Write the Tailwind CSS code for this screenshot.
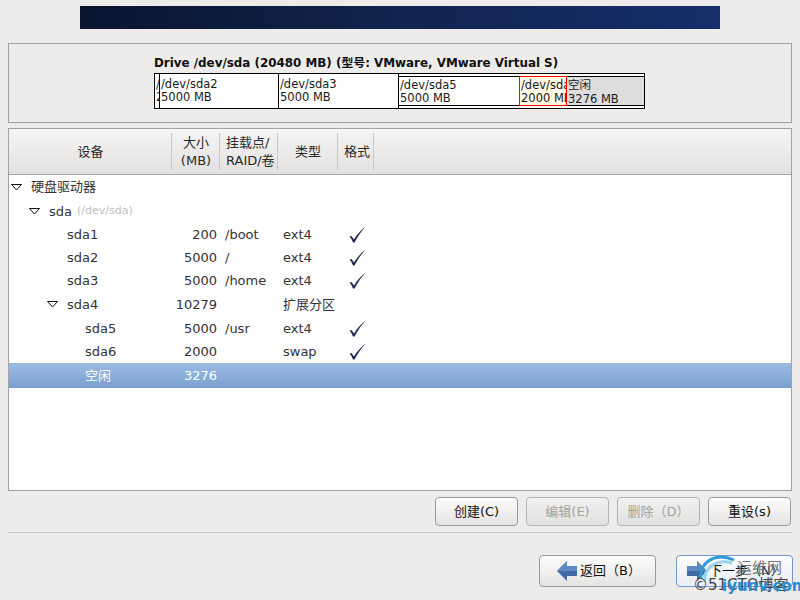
<!DOCTYPE html>
<html lang="en">
<head>
    <meta charset="UTF-8">
    <meta name="viewport" content="width=device-width, initial-scale=1.0">
    <script src="https://cdn.jsdelivr.net/npm/@tailwindcss/browser@4"></script>
    <title>Partition</title>
</head>
<body class="bg-[#edecea]">
<div class="relative w-[800px] h-[600px] overflow-hidden flex flex-col text-[13px] text-[#1a1a1a] font-['DejaVu_Sans','Noto_Sans_CJK_SC',sans-serif]">
    <!-- banner -->
    <div class="mt-[6px] ml-[80px] w-[640px] h-[23px] shrink-0 bg-gradient-to-r from-[#0a1530] via-[#12244f] to-[#172e6c]"></div>

    <!-- drive bar -->
    <div class="mt-[14px] ml-[8px] w-[784px] h-[80px] shrink-0 border border-[#a3a2a0] pl-[145px] pt-[11px]">
        <div class="h-[18px] leading-[16px] text-[11.9px] font-bold text-[#111] whitespace-nowrap">Drive /dev/sda (20480 MB) (型号: VMware, VMware Virtual S)</div>
        <div class="flex w-[491px] h-[36px] border border-black text-[11.5px] leading-[13px] bg-white overflow-hidden">
            <div class="w-[5px] shrink-0 overflow-hidden border-r border-black pt-[4px] pl-[1px] whitespace-nowrap"><span class="block w-[3px] overflow-hidden">/dev/sda1</span><span class="block w-[3px] overflow-hidden">200 MB</span></div>
            <div class="w-[119px] shrink-0 overflow-hidden border-r border-black pt-[4px] pl-[1px]">/dev/sda2<br>5000 MB</div>
            <div class="w-[120px] shrink-0 overflow-hidden border-r border-black pt-[4px] pl-[1px]">/dev/sda3<br>5000 MB</div>
            <!-- extended partition -->
            <div class="flex-1 flex border-y border-y-black mt-[2px] h-[30px] min-w-0">
                <div class="w-[120px] shrink-0 pl-[1px] pt-[2px]">/dev/sda5<br>5000 MB</div>
                <div class="w-[48px] shrink-0 -my-[1px] overflow-hidden border border-[#f00] bg-[#fdf8e4] pl-[1px] pt-[2px] whitespace-nowrap">/dev/sda6<br>2000 MB</div>
                <div class="flex-1 bg-[#dedede] pl-[1px] pt-[1px] leading-[14px]">空闲<br>3276 MB</div>
            </div>
        </div>
    </div>

    <!-- partition tree -->
    <div class="mt-[5px] ml-[8px] w-[784px] h-[363px] shrink-0 border border-[#a3a2a0] bg-white">
        <div class="h-[46px] grid grid-cols-[163px_48px_58px_60px_36px_1fr] border-b border-[#a8a7a5] bg-gradient-to-b from-[#f6f5f4] to-[#e2e1df] text-center leading-[18px] text-[#2a2a2a]">
            <div class="flex items-center justify-center border-r border-[#c9c8c6] my-[4px] pl-[1px]">设备</div>
            <div class="flex items-center justify-center border-r border-[#c9c8c6] my-[4px] pl-[1px]">大小<br>(MB)</div>
            <div class="flex items-center border-r border-[#c9c8c6] my-[4px] pl-[6px] text-left whitespace-nowrap">挂载点/<br>RAID/卷</div>
            <div class="flex items-center justify-center border-r border-[#c9c8c6] my-[4px] pl-[1px]">类型</div>
            <div class="flex items-center justify-center border-r border-[#c9c8c6] my-[4px] pl-[3px]">格式</div>
            <div></div>
        </div>

        <div class="h-[24px] flex items-center text-[#333]">
            <svg class="ml-[2px] mr-[9px]" width="11" height="7" viewBox="0 0 11 7"><path d="M.5.5h10L5.500 6z" fill="#fff" stroke="#111"/></svg>
            <span>硬盘驱动器</span>
        </div>
        <div class="h-[24px] flex items-center text-[#333] pt-[1px]">
            <svg class="ml-[20px] mr-[9px]" width="11" height="7" viewBox="0 0 11 7"><path d="M.5.5h10L5.500 6z" fill="#fff" stroke="#111"/></svg>
            <span>sda</span><span class="ml-[5px] text-[11px] text-[#c0c0c0]">(/dev/sda)</span>
        </div>

        <div class="h-[23px] grid grid-cols-[163px_48px_58px_60px_36px_1fr] items-center text-[#333]">
            <div class="pl-[58px]">sda1</div><div class="text-right pr-[3px]">200</div><div class="pl-[5px]">/boot</div><div class="pl-[5px]">ext4</div>
            <div class="pl-[11px]"><svg width="17" height="17" viewBox="0 0 17 17"><path d="M.500 10.500 2.500 10 5 13.500C8 8.500 12 4 16.800.5 12.500 5 9 10 5.500 16.500H4C3.300 14.500 2 12 .500 10.500z" fill="#1f2a4d"/></svg></div>
        </div>
        <div class="h-[23px] grid grid-cols-[163px_48px_58px_60px_36px_1fr] items-center text-[#333]">
            <div class="pl-[58px]">sda2</div><div class="text-right pr-[3px]">5000</div><div class="pl-[5px]">/</div><div class="pl-[5px]">ext4</div>
            <div class="pl-[11px]"><svg width="17" height="17" viewBox="0 0 17 17"><path d="M.500 10.500 2.500 10 5 13.500C8 8.500 12 4 16.800.5 12.500 5 9 10 5.500 16.500H4C3.300 14.500 2 12 .500 10.500z" fill="#1f2a4d"/></svg></div>
        </div>
        <div class="h-[23px] grid grid-cols-[163px_48px_58px_60px_36px_1fr] items-center text-[#333]">
            <div class="pl-[58px]">sda3</div><div class="text-right pr-[3px]">5000</div><div class="pl-[5px]">/home</div><div class="pl-[5px]">ext4</div>
            <div class="pl-[11px]"><svg width="17" height="17" viewBox="0 0 17 17"><path d="M.500 10.500 2.500 10 5 13.500C8 8.500 12 4 16.800.5 12.500 5 9 10 5.500 16.500H4C3.300 14.500 2 12 .500 10.500z" fill="#1f2a4d"/></svg></div>
        </div>
        <div class="h-[24px] grid grid-cols-[163px_48px_58px_60px_36px_1fr] items-center text-[#333] pt-[1px]">
            <div class="pl-[38px] flex items-center"><svg class="mr-[9px]" width="11" height="7" viewBox="0 0 11 7"><path d="M.5.5h10L5.500 6z" fill="#fff" stroke="#111"/></svg>sda4</div><div class="text-right pr-[3px]">10279</div><div></div><div class="pl-[5px] whitespace-nowrap">扩展分区</div>
        </div>
        <div class="h-[24px] grid grid-cols-[163px_48px_58px_60px_36px_1fr] items-center text-[#333] pt-[1px]">
            <div class="pl-[76px]">sda5</div><div class="text-right pr-[3px]">5000</div><div class="pl-[5px]">/usr</div><div class="pl-[5px]">ext4</div>
            <div class="pl-[11px]"><svg width="17" height="17" viewBox="0 0 17 17"><path d="M.500 10.500 2.500 10 5 13.500C8 8.500 12 4 16.800.5 12.500 5 9 10 5.500 16.500H4C3.300 14.500 2 12 .500 10.500z" fill="#1f2a4d"/></svg></div>
        </div>
        <div class="h-[23px] grid grid-cols-[163px_48px_58px_60px_36px_1fr] items-center text-[#333]">
            <div class="pl-[76px]">sda6</div><div class="text-right pr-[3px]">2000</div><div></div><div class="pl-[5px]">swap</div>
            <div class="pl-[11px]"><svg width="17" height="17" viewBox="0 0 17 17"><path d="M.500 10.500 2.500 10 5 13.500C8 8.500 12 4 16.800.5 12.500 5 9 10 5.500 16.500H4C3.300 14.500 2 12 .500 10.500z" fill="#1f2a4d"/></svg></div>
        </div>
        <div class="h-[25px] grid grid-cols-[163px_48px_58px_60px_36px_1fr] items-center text-white bg-gradient-to-b from-[#9bbbe2] to-[#7ba0cf]">
            <div class="pl-[76px]">空闲</div><div class="text-right pr-[3px]">3276</div>
        </div>
    </div>

    <!-- partition actions -->
    <div class="mt-[6px] ml-[435px] flex gap-[8px] shrink-0">
        <button class="w-[83px] h-[29px] rounded-[4px] border border-[#9b9a98] bg-gradient-to-b from-[#fdfdfc] to-[#e4e3e1] text-[#111]">创建(C)</button>
        <button class="w-[83px] h-[29px] rounded-[4px] border border-[#b5b4b2] bg-gradient-to-b from-[#f2f1ef] to-[#e2e1df] text-[#a3a3a1]">编辑(E)</button>
        <button class="w-[83px] h-[29px] rounded-[4px] border border-[#b5b4b2] bg-gradient-to-b from-[#f2f1ef] to-[#e2e1df] text-[#a3a3a1]">删除（D）</button>
        <button class="w-[83px] h-[29px] rounded-[4px] border border-[#9b9a98] bg-gradient-to-b from-[#fdfdfc] to-[#e4e3e1] text-[#111]">重设(s)</button>
    </div>
    <div class="mt-[6px] ml-[8px] w-[784px] h-[2px] shrink-0 border-t border-[#c9c8c6] border-b-white"></div>

    <!-- wizard navigation -->
    <div class="mt-[21px] ml-[539px] flex gap-[20px] shrink-0">
        <button class="w-[117px] h-[32px] rounded-[4px] border border-[#9b9a98] bg-gradient-to-b from-[#fdfdfc] to-[#e4e3e1] text-[#111] flex items-center pl-[17px] gap-[3px]">
            <svg width="20" height="20" viewBox="0 0 20 20"><path d="M10 0 0 10l10 10v-5h10V5H10z" fill="#3f6ba6"/><path d="M10 0 0 10h20V5H10z" fill="#5f8bc2"/></svg>
            <span>返回（B）</span>
        </button>
        <button class="w-[117px] h-[32px] rounded-[4px] border border-[#6f9bd1] bg-gradient-to-b from-[#fdfdfc] to-[#e8eef6] text-[#111] flex items-center pl-[10px] gap-[2px]">
            <svg width="20" height="20" viewBox="0 0 20 20"><path d="M10 0l10 10-10 10v-5H0V5h10z" fill="#3f6ba6"/><path d="M10 0l10 10H0V5h10z" fill="#5f8bc2"/></svg>
            <span>下一步（N）</span>
        </button>
    </div>

    <!-- watermark -->
    <div class="absolute left-[690px] top-[552px] w-[110px] h-[48px] pointer-events-none">
        <svg class="absolute left-[0px] top-[0px]" width="50" height="46" viewBox="0 0 50 46" fill="none"><path d="M11 26C9 12 24-1 44 8" stroke="#2f9bd8" stroke-width="3"/><path d="M15 30C13 17 26 6 42 11" stroke="#9ad4f2" stroke-width="3"/></svg>
        <span class="absolute left-[47px] top-[5px] text-[15px] text-[#777] whitespace-nowrap">运维网</span>
        <span class="absolute left-[3px] top-[22px] text-[15px] text-[#444] whitespace-nowrap">©51CTO博客</span>
        <span class="absolute left-[32px] top-[23px] text-[15px] font-bold text-[#2a8fd0] whitespace-nowrap">iyunv.com</span>
    </div>
</div>
</body>
</html>
